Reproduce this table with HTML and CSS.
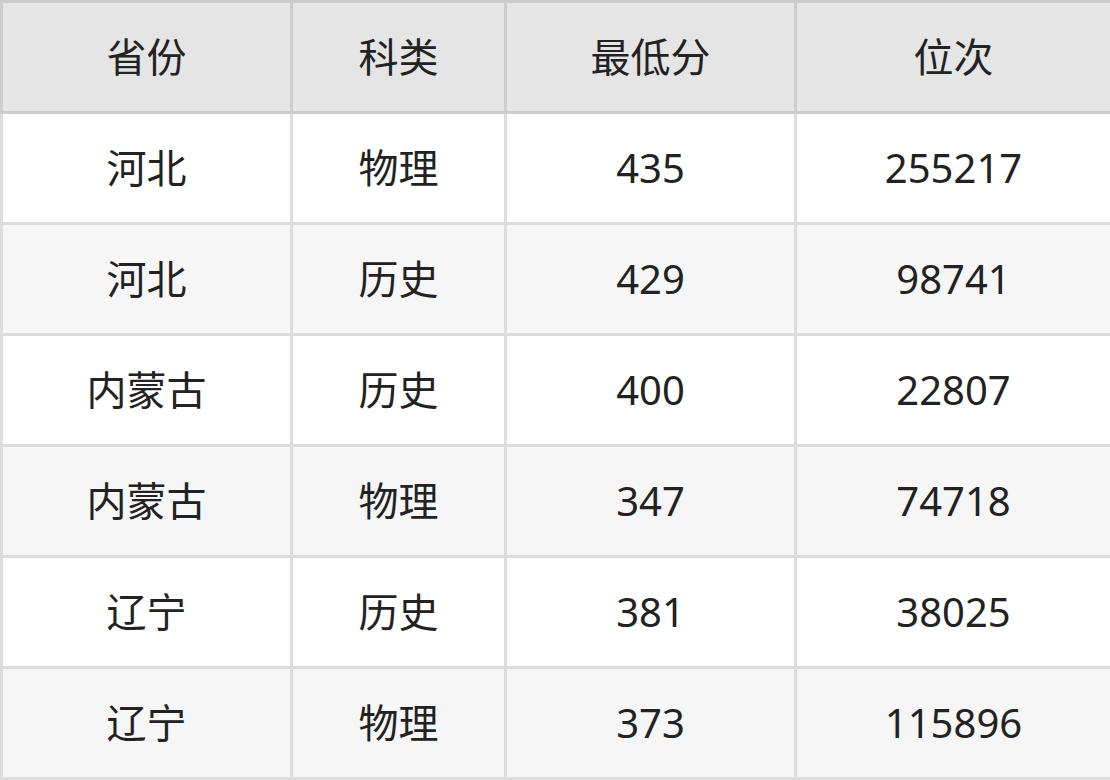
FILE: index.html
```html
<!DOCTYPE html>
<html lang="zh">
<head>
<meta charset="utf-8">
<link rel="stylesheet" href="styles.css">
</head>
<body>
<table class="score-table">
  <colgroup>
    <col class="c1"><col class="c2"><col class="c3"><col class="c4">
  </colgroup>
  <thead>
    <tr><th>省份</th><th>科类</th><th>最低分</th><th>位次</th></tr>
  </thead>
  <tbody>
    <tr><td>河北</td><td>物理</td><td>435</td><td>255217</td></tr>
    <tr><td>河北</td><td>历史</td><td>429</td><td>98741</td></tr>
    <tr><td>内蒙古</td><td>历史</td><td>400</td><td>22807</td></tr>
    <tr><td>内蒙古</td><td>物理</td><td>347</td><td>74718</td></tr>
    <tr><td>辽宁</td><td>历史</td><td>381</td><td>38025</td></tr>
    <tr><td>辽宁</td><td>物理</td><td>373</td><td>115896</td></tr>
  </tbody>
</table>
</body>
</html>
```

FILE: styles.css
```css
html, body {
  margin: 0;
  padding: 0;
  background: #ffffff;
}
.score-table {
  width: 1110px;
  border-collapse: collapse;
  table-layout: fixed;
  font-family: "Noto Sans", "Noto Sans CJK SC", sans-serif;
  font-size: 40px;
  color: #222222;
}
.c1 { width: 290px; }
.c2 { width: 214px; }
.c3 { width: 290px; }
.c4 { width: 316px; }
.score-table th,
.score-table td {
  height: 108px;
  padding: 0;
  text-align: center;
  vertical-align: middle;
  border: 3px solid #dddddd;
  font-weight: normal;
  line-height: 1;
}
.score-table th {
  background: #e5e5e5;
  border-color: #cccccc;
}
.score-table tbody tr:nth-child(even) td {
  background: #f6f6f6;
}
```
